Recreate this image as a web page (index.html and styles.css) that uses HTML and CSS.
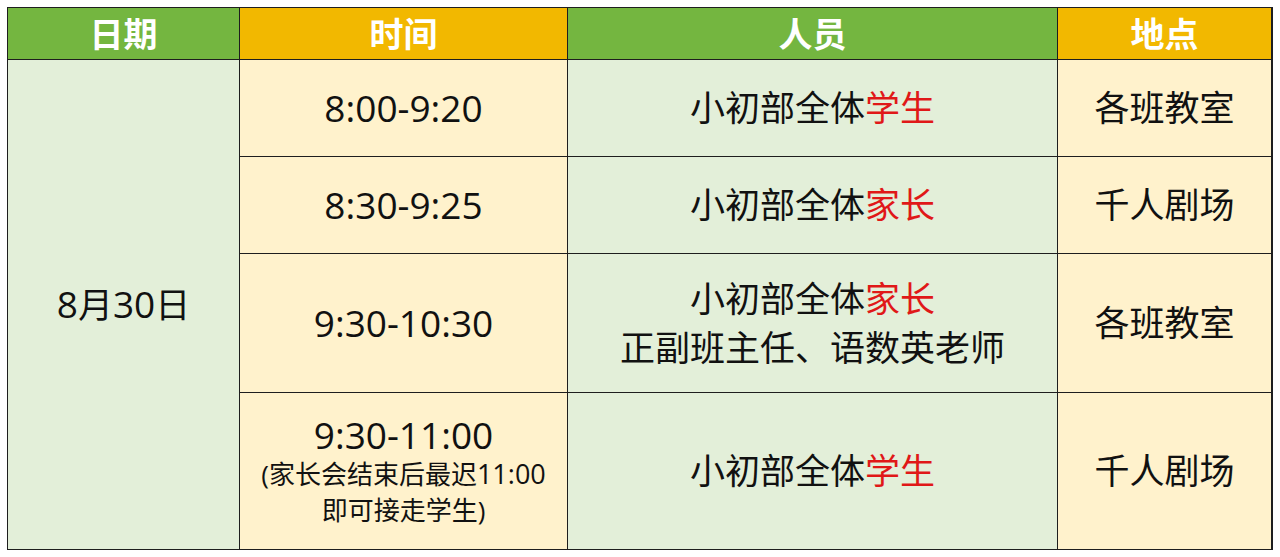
FILE: index.html
```html
<!DOCTYPE html>
<html lang="zh-CN">
<head>
<meta charset="utf-8">
<title>日程安排</title>
<link rel="stylesheet" href="styles.css">
</head>
<body>
<div class="schedule">
  <div class="cell head green">日期</div>
  <div class="cell head gold">时间</div>
  <div class="cell head green">人员</div>
  <div class="cell head gold">地点</div>

  <div class="cell date light-green"><div><span class="num">8</span>月<span class="num">30</span>日</div></div>

  <div class="cell time light-gold"><div>8:00-9:20</div></div>
  <div class="cell light-green"><div>小初部全体<span class="red">学生</span></div></div>
  <div class="cell light-gold"><div>各班教室</div></div>

  <div class="cell time light-gold"><div>8:30-9:25</div></div>
  <div class="cell light-green"><div>小初部全体<span class="red">家长</span></div></div>
  <div class="cell light-gold"><div>千人剧场</div></div>

  <div class="cell time light-gold"><div>9:30-10:30</div></div>
  <div class="cell light-green multi"><div>小初部全体<span class="red">家长</span></div><div>正副班主任、语数英老师</div></div>
  <div class="cell light-gold"><div>各班教室</div></div>

  <div class="cell light-gold time-note"><div class="big">9:30-11:00</div><div class="small">(家长会结束后最迟<span class="snum">11:00</span></div><div class="small">即可接走学生)</div></div>
  <div class="cell light-green"><div>小初部全体<span class="red">学生</span></div></div>
  <div class="cell light-gold"><div>千人剧场</div></div>
</div>
</body>
</html>
```
FILE: styles.css
```css
html, body {
  margin: 0;
  padding: 0;
  background: #ffffff;
}

body {
  font-family: "Open Sans", "Noto Sans CJK SC", sans-serif;
}

.schedule {
  margin: 7px 0 0 7px;
  width: 1264px;
  display: grid;
  grid-template-columns: 231px 327px 489px 213px;
  grid-template-rows: 51px 96px 96px 138px 156px;
  gap: 1px;
  padding: 1px;
  background: #1e1e1e;
}

.cell {
  display: flex;
  flex-direction: column;
  align-items: center;
  justify-content: center;
  text-align: center;
  color: #111111;
  font-size: 35px;
  line-height: 1.2;
  white-space: nowrap;
}

.head {
  color: #ffffff;
  font-weight: 700;
  font-size: 34px;
  font-family: "Noto Sans CJK SC", sans-serif;
}

.green { background: #74b640; }
.gold { background: #f2b800; }
.light-green { background: #e3efd9; }
.light-gold { background: #fff2cc; }

.time {
  font-size: 37px;
}

.date {
  grid-row: 2 / 6;
  grid-column: 1;
  font-size: 35px;
}

.date .num {
  font-size: 37px;
}

.red { color: #e01818; }

.multi {
  line-height: 49px;
}

.time-note .big {
  font-size: 37px;
  line-height: 42px;
}

.time-note .small {
  font-size: 26px;
  line-height: 36px;
}

.time-note .snum {
  font-size: 27px;
}
```
